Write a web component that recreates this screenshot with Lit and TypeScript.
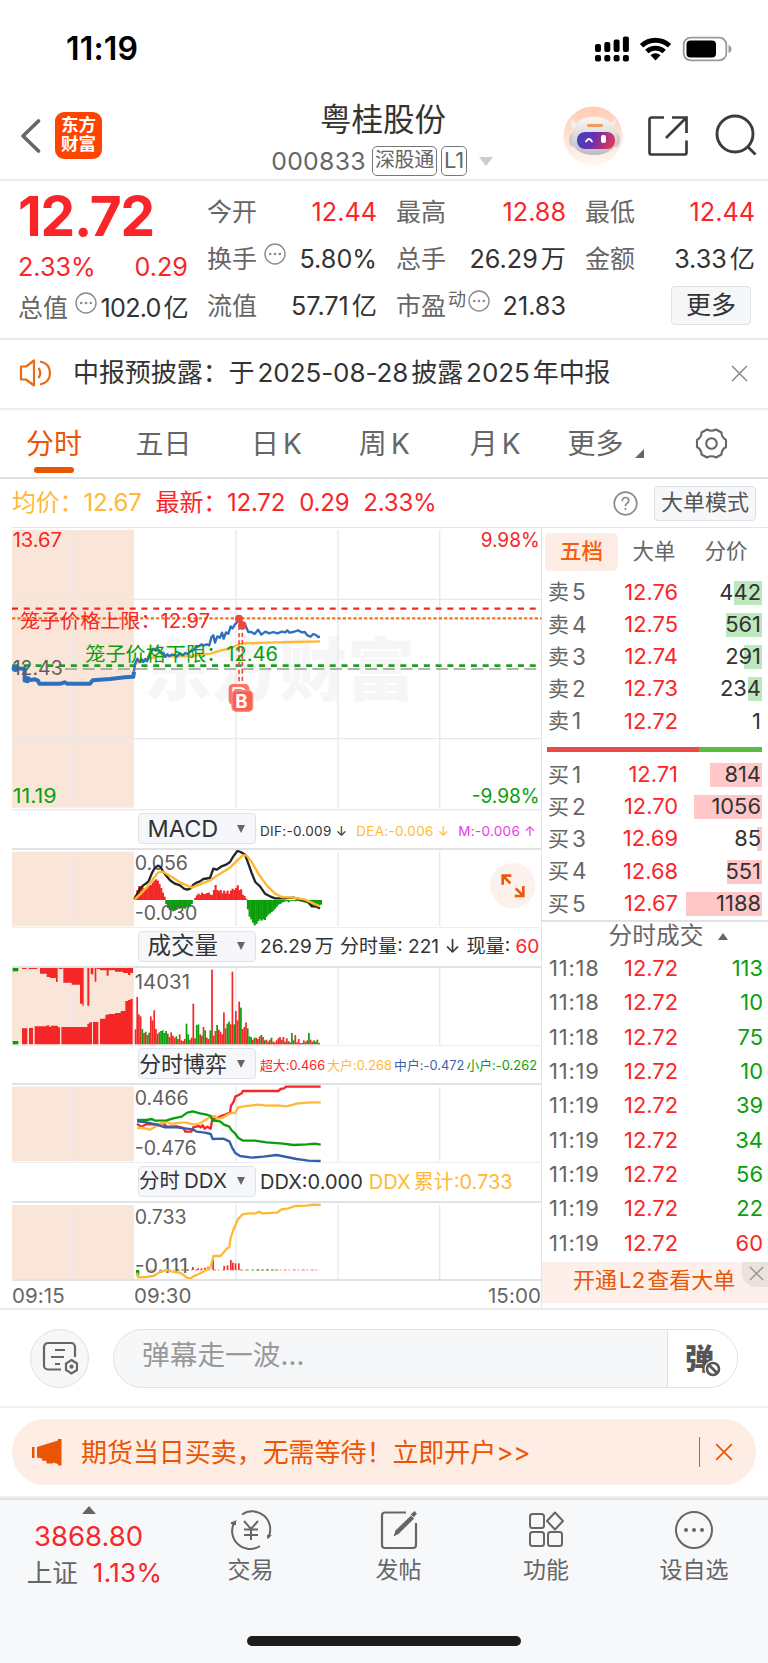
import { LitElement, html, svg, css, nothing } from "lit";

type Row = [string, string, string, number];

const sells: Row[] = [
  ["卖5", "12.76", "442", 28],
  ["卖4", "12.75", "561", 36],
  ["卖3", "12.74", "291", 18.5],
  ["卖2", "12.73", "234", 14.5],
  ["卖1", "12.72", "1", 0],
];
const buys: Row[] = [
  ["买1", "12.71", "814", 52],
  ["买2", "12.70", "1056", 68],
  ["买3", "12.69", "85", 5],
  ["买4", "12.68", "551", 35.5],
  ["买5", "12.67", "1188", 76.5],
];
const trades: [string, string, string][] = [
  ["11:18", "113", "down"],
  ["11:18", "10", "down"],
  ["11:18", "75", "down"],
  ["11:19", "10", "down"],
  ["11:19", "39", "down"],
  ["11:19", "34", "down"],
  ["11:19", "56", "down"],
  ["11:19", "22", "down"],
  ["11:19", "60", "up"],
];

const RED = "#f42626";
const GREEN = "#0a9e0a";
const YELLOW = "#ffb937";
const STEP = 5.1;

const macdBars = [
  15, 30, 42, 40, 38, 34, 36, 38, 42, 45, 52, 58, 62, 58, 48, 36, 22, 10, -12, -24, -30, -30, -34, -32, -30, -26, -26,
  -24, -24, -26, -22, -20, -18, -12, 0, 6, 14, 19, 15, 22, 18, 18, 21, 22, 16, 15, 30, 45, 30, 26, 30, 20, 28, 20, 28,
  18, 28, 34, 30, 36, 44, 30, 32, 16, 12, 4, -28, -50, -58, -68, -76, -72, -64, -58, -62, -58, -60, -50, -44, -40, -36,
  -32, -26, -20, -14, -12, -8, -6, -4, -3, -7, -2, -3, -2, -4, -3, -3, -5, -6, -7, -8, -10, -13, -16, -18, -20, -20,
  -20, -16, -14,
];

const volBars = [
  45, 142, 90, 84, -46, 34, -38, 28, -35, 84, 72, 102, 46, -32, 36, -40, -42, -34, -40, 32, -22, 36, 26, 20, -24, 16, 30,
  12, 10, 16, -62, -30, 14, 20, 122, 18, -58, -60, 30, -26, 52, -42, 20, 16, -42, 224, 26, 40, -58, 44, 38, 30, 96, 48,
  -62, -68, 60, 218, -60, 100, 72, 128, -110, 46, 52, 66, -48, -24, -22, 14, -20, 20, 16, 24, -28, 22, -12, 14, 8, 14,
  -20, 8, 6, 12, 18, 22, 14, 22, -8, 18, 10, -6, -34, -12, 28, 6, 16, 4, 4, 12, -8, 12, -34, 14, 8, -12, 8, -14, 4,
];

const bars = (data: number[], base: number, x0: number) =>
  data.map((v, i) =>
    v === 0
      ? nothing
      : svg`<rect x=${x0 + i * STEP} y=${v > 0 ? base - v : base} width="6.4" height=${Math.abs(v)} fill=${v > 0 ? RED : GREEN}></rect>`
  );

const volumes = (data: number[], base: number, x0: number) =>
  data.map(
    (v, i) =>
      svg`<rect x=${x0 + i * STEP} y=${base - Math.abs(v)} width="5.1" height=${Math.abs(v)} fill=${v > 0 ? RED : GREEN}></rect>`
  );

const line = (pts: string, color: string, w = 4) =>
  svg`<polyline points=${pts} fill="none" stroke=${color} stroke-width=${w} stroke-linejoin="round"></polyline>`;

const grid = (top: number, bottom: number) => svg`
  <rect x="36" y=${top} width="366" height=${bottom - top} fill="#fae6d9"></rect>
  ${[219, 708, 1014, 1319].map(
    (x) => svg`<line x1=${x} x2=${x} y1=${top} y2=${bottom} stroke="#e6e8ee" stroke-width="4"></line>`
  )}`;

const label = (x: number, y: number, w: number, t: string, fill = "#5f5f5f", size = 59) =>
  svg`<text x=${x} y=${y} font-size=${size} textLength=${w} lengthAdjust="spacingAndGlyphs" fill=${fill}>${t}</text>`;

const dots = html`<svg class="dots" viewBox="0 0 22 22">
  <circle cx="11" cy="11" r="10" fill="none" stroke="#8a8a8a" stroke-width="1.4" />
  <g fill="#8a8a8a"><circle cx="6.2" cy="11" r="1.3" /><circle cx="11" cy="11" r="1.3" /><circle cx="15.8" cy="11" r="1.3" /></g>
</svg>`;

const cross = (size: number, color: string, w = 1.6) => html`<svg width=${size} height=${size} viewBox="0 0 16 16">
  <path d="M1 1L15 15M15 1L1 15" stroke=${color} stroke-width=${w} fill="none" />
</svg>`;

class AppRoot extends LitElement {
  static styles = css`
    :host {
      display: block;
      width: 768px;
      height: 1663px;
      background: #fff;
      overflow: hidden;
      font-family: Inter, "Noto Sans CJK SC", sans-serif;
      color: #333;
      line-height: 1;
    }
    * { box-sizing: border-box; }
    svg { display: block; flex: none; }
    svg text { font-family: Inter, "Noto Sans CJK SC", sans-serif; }
    div, span { white-space: nowrap; }
    .up, .stat.up { color: #fa2529; }
    .down { color: #0a9e0a; }
    .yellow { color: #ffb937; }
    .blue { color: #3c62a4; }
    .magenta { color: #e63ae8; }
    .num { margin: 0 3px; }

    .status { height: 96px; display: flex; align-items: center; padding: 2px 36px 0 66px; justify-content: space-between; }
    .time { font-size: 32px; font-weight: 600; color: #000; letter-spacing: 0.2px; }

    .header { height: 85px; border-bottom: 2px solid #ececec; display: flex; padding-left: 20px; }
    .back { margin: 23px 14px 0 0; }
    .logo { width: 47px; height: 47px; margin-top: 16px; border-radius: 9px; background: #ff4400; color: #fff; font-size: 17.5px; font-weight: 700; line-height: 18.5px; text-align: center; padding-top: 4px; }
    .title { width: 430px; display: flex; flex-direction: column; align-items: center; padding-top: 8px; margin-left: 66px; }
    .name { font-size: 31.5px; line-height: 31px; color: #333; }
    .code { display: flex; align-items: center; font-size: 24.8px; color: #666; margin: 11px 2px 0 0; height: 30px; letter-spacing: 0.3px; }
    .code span + span { margin-left: 4px; }
    .tag { height: 30px; border: 1.5px solid #777; border-radius: 5px; font-size: 20px; line-height: 27px; padding: 0 2px; letter-spacing: -0.3px; }
    .tag.l1 { font-size: 22px; }
    .tag.first { margin-left: 6px !important; }
    .caret { width: 0; height: 0; border: 7px solid transparent; border-top: 9px solid #ccc; border-bottom: 0; margin-left: 12px; }
    .robot { margin: 10px 0 0 -35px; }
    .share { margin: 19px 0 0 24px; }
    .search { margin: 18px 0 0 26px; }

    .stats { height: 159px; border-bottom: 2px solid #e6eaec; display: grid; grid-template-columns: repeat(4, 170px); column-gap: 19px; padding: 8px 0 0 18px; font-size: 25.2px; }
    .stat { height: 47px; display: flex; align-items: center; color: #333; }
    .stat .k { color: #666; font-size: 25px; }
    .stat .v { margin-left: auto; display: flex; gap: 3px; }
    .stat .v.tight { letter-spacing: -0.8px; }
    .stat .sup { font-size: 18px; margin-top: -14px; color: #666; }
    .dots { width: 22px; height: 22px; margin: -11px 0 0 7px; }
    .sup { margin-left: 2px; }
    .sup + .dots { margin-left: 2px; }
    .first-col { margin-top: -4px; }
    .first-col .stat { height: 41px; }
    .price { height: 62px; display: flex; align-items: center; font-size: 55px; font-weight: 700; letter-spacing: -1.2px; color: #fa2529; }
    .more { margin: 3px 4px 0 auto; width: 80px; height: 39px; border: 1.5px solid #dfe1e8; border-radius: 4px; background: #f6f7f9; text-align: center; line-height: 36px; font-size: 25px; }

    .notice { height: 70px; border-bottom: 2px solid #eee; display: flex; align-items: center; padding: 0 20px 2px 19px; font-size: 26px; }
    .notice .msg { margin-left: 20px; letter-spacing: -0.07px; }
    .notice .close { margin-left: auto; }

    .tabs { height: 69px; border-bottom: 2px solid #dde1e4; display: flex; align-items: flex-start; padding: 20px 0 0 26px; font-size: 28px; line-height: 28px; color: #666; }
    .tab { display: flex; gap: 4px; }
    .tab.on { color: #ea5504; flex-direction: column; align-items: center; gap: 0; margin-right: 1px; }
    .tab.on::after { content: ""; width: 40px; height: 6px; border-radius: 3px; background: #ea5504; margin-top: 9px; }
    .corner { margin: 19px 0 0 11px; }
    .gear { margin: -3px 0 0 51px; }

    .info { height: 48px; display: flex; align-items: center; padding: 0 12px; font-size: 24px; letter-spacing: -0.2px; }
    .info .up { margin-left: 14px; }
    .info .help { margin-left: auto; }
    .mode { margin-left: 16px; width: 102px; height: 35px; border: 1.5px solid #dfe1e8; border-radius: 4px; background: #f6f7f9; color: #555; font-size: 22px; line-height: 31px; text-align: center; letter-spacing: 0; }

    .main { height: 783px; display: flex; border-bottom: 2px solid #e9ecee; }
    .charts { width: 530px; margin-left: 12px; border-right: 1.5px solid #e1e4e8; border-top: 1.5px solid #e1e4e8; }
    .ind-head { height: 39px; display: flex; align-items: center; padding-left: 126px; }
    .select { width: 118px; height: 31px; border: 1.5px solid #dfe2e8; border-radius: 4px; background: #f6f7fa; display: flex; align-items: center; justify-content: space-between; padding: 0 10px 0 8.5px; font-size: 23.5px; color: #333; flex: none; }
    .select::after { content: ""; border: 4.5px solid transparent; border-top: 8px solid #666; border-bottom: 0; }
    .select.wide { padding-left: 0; font-size: 22px; }
    .select.ddx { padding-left: 0; font-size: 20.5px; }
    .ddx-latin { margin-left: 4px; }
    .legend { margin-left: 4px; display: flex; align-items: center; }
    .legend.l1 { font-size: 13.5px; letter-spacing: 0.3px; gap: 9px; padding-top: 6px; }
    .legend.l2 { font-size: 19.1px; gap: 6px; padding-top: 2px; }
    .legend.l3 { font-size: 12.8px; gap: 2px; padding-top: 6px; letter-spacing: 0.05px; }
    .legend.l4 { font-size: 20px; gap: 6px; padding-top: 1px; }
    .ind { border-top: 2px solid #dfe3e6; height: 78.5px; }
    .ind.last { height: 78px; }
    .axis { border-top: 2px solid #dfe3e6; height: 28px; padding-top: 5px; display: grid; grid-template-columns: 122px 1fr auto; font-size: 20.5px; letter-spacing: 0.1px; color: #666; }

    .book { width: 226px; border-top: 1.5px solid #e1e4e8; display: flex; flex-direction: column; }
    .book-tabs { display: flex; height: 48px; padding: 5px 0 0 3px; font-size: 21.5px; color: #666; }
    .book-tabs span { width: 72px; height: 38px; line-height: 36px; text-align: center; border-radius: 5px; }
    .book-tabs .on { background: #fdece4; color: #f85c0c; font-weight: 500; width: 73px; }
    .quote { height: 32.25px; display: grid; grid-template-columns: 61px 69px 1fr; align-items: center; padding: 1px 6px 0; font-size: 21.9px; color: #333; }
    .quote .k { color: #666; font-size: 21px; display: flex; gap: 3px; }
    .quote .k .lv { font-size: 22.5px; }
    .quote .p { text-align: right; }
    .vol { height: 24px; display: flex; align-items: center; justify-content: flex-end; padding-right: 1px; }
    .vol.sell { background: linear-gradient(#bde7bd, #bde7bd) no-repeat right / var(--w) 100%; }
    .vol.buy { background: linear-gradient(#ffc7c8, #ffc7c8) no-repeat right / var(--w) 100%; }
    .split { margin: 10px 6px 6px 5px; height: 5px; flex: none; background: linear-gradient(90deg, #e94b4b 70.5%, #5cbb42 70.5%); }
    .deal-head { height: 32px; border-top: 2px solid #dfe3e6; display: flex; align-items: center; justify-content: center; font-size: 23.7px; color: #666; padding: 0 0 1px 27px; flex: none; }
    .deal-head::after { content: ""; border: 5.5px solid transparent; border-bottom: 7px solid #666; border-top: 0; margin-left: 15px; }
    .deal { height: 34.4px; display: grid; grid-template-columns: 60px 69px 1fr; align-items: center; padding: 0 5px 0 7px; font-size: 21.9px; }
    .deal .t { color: #666; letter-spacing: 0.8px; }
    .deal .p { text-align: right; }
    .deal .n { text-align: right; }
    .promo { height: 41px; flex: none; margin-top: 1px; background: #fdf0ea; color: #ea5504; font-size: 22px; display: flex; padding-left: 31px; line-height: 37px; }
    .promo .num { letter-spacing: 0.2px; margin: 0 2px; }
    .promo .x { margin-left: auto; width: 26px; height: 25px; border-bottom-left-radius: 14px; background: #ece1db; padding: 4px 0 0 7px; }

    .composer { height: 98px; border-bottom: 2px solid #f2f2f2; display: flex; align-items: center; padding: 0 30px; }
    .round { width: 59px; height: 59px; border: 1.5px solid #dfe2e6; border-radius: 50%; background: #f6f7f9; display: grid; place-items: center; }
    .field { margin-left: 24px; width: 625px; height: 59px; border: 1.5px solid #dfe2e6; border-radius: 30px; background: #f6f7f9; display: flex; overflow: hidden; font-size: 27.7px; color: #999; }
    .field .ph { padding: 12px 0 0 28px; flex: 1; }
    .danmu { width: 70px; background: #fff; border-left: 1.5px solid #dfe2e6; padding: 13px 0 0 17px; }

    .ad { margin: 11px 12px 11px; height: 66px; border-radius: 33px; background: #fdede5; color: #ea5504; display: flex; align-items: center; padding: 0 23px 0 19px; font-size: 26px; }
    .ad .msg { margin-left: 18px; letter-spacing: -0.05px; padding-top: 1px; }
    .ad .bar { margin-left: auto; width: 1.5px; height: 30px; background: #ea5504; margin-right: 15px; }

    .bottom { height: 168px; border-top: 2px solid #eee; background: #f7f8fa; display: flex; flex-direction: column; align-items: center; }
    .nav { width: 100%; height: 139px; flex: none; border-top: 2px solid #dfe1e4; display: grid; grid-template-columns: 176px 149px 147px 148px 148px; }
    .item { display: flex; flex-direction: column; align-items: center; font-size: 23px; color: #666; padding-top: 10px; }
    .item svg { margin-bottom: 9px; }
    .index { padding: 6px 0 0 1px; }
    .index .tri { border: 7.5px solid transparent; border-bottom: 8px solid #666; border-top: 0; }
    .index .n { font-size: 27.5px; margin-top: 9px; }
    .index .r { display: flex; gap: 15px; font-size: 25.5px; margin: 9px 0 0 12px; }
    .index .r .up { font-size: 26px; letter-spacing: 0.3px; }
    .home { width: 274px; height: 10px; border-radius: 5px; background: #1c1c1c; flex: none; margin-top: -1px; }
  `;

  private status() {
    return html`<div class="status">
      <div class="time">11:19</div>
      <svg width="138" height="26" viewBox="594 36 138 26">
        <g fill="#000">
          ${[0, 1, 2, 3].map((i) => {
            const h = [8, 10, 12.5, 15.5][i];
            return svg`<rect x=${595 + i * 9.3} y=${52 - h} width="6" height=${h} rx="2"></rect><rect x=${595 + i * 9.3} y="55" width="6" height="6.5" rx="2"></rect>`;
          })}
        </g>
        <g fill="none" stroke="#000" stroke-width="4.8">
          <path d="M641.5 45.8a20.5 20.5 0 0 1 28 0" />
          <path d="M646.8 51.6a12.8 12.8 0 0 1 17.4 0" />
        </g>
        <path d="M655.5 60.5l-5-5.3a7.5 7.5 0 0 1 10 0z" fill="#000" />
        <rect x="683.7" y="37.7" width="42.6" height="22.6" rx="7" fill="none" stroke="#9a9a9a" stroke-width="1.8" />
        <rect x="686.5" y="40.5" width="29.5" height="17" rx="4" fill="#000" />
        <path d="M728.5 45v8q3-1 3-4t-3-4z" fill="#9a9a9a" />
      </svg>
    </div>`;
  }

  private header() {
    return html`<div class="header">
      <svg class="back" width="21" height="34" viewBox="0 0 21 34"><path d="M18.5 2L3 17L18.5 32" fill="none" stroke="#666" stroke-width="3.6" stroke-linecap="round" stroke-linejoin="round" /></svg>
      <div class="logo">东方<br />财富</div>
      <div class="title">
        <div class="name">粤桂股份</div>
        <div class="code"><span>000833</span><span class="tag first">深股通</span><span class="tag l1">L1</span><i class="caret"></i></div>
      </div>
      <svg class="robot" width="60" height="60" viewBox="0 0 60 60">
        <defs>
          <linearGradient id="halo" x1="0" y1="0" x2="0" y2="1"><stop offset="0" stop-color="#ffccb4" /><stop offset="1" stop-color="#fff7f3" /></linearGradient>
          <linearGradient id="visor" x1="0" y1="0" x2="1" y2="0.2"><stop offset="0" stop-color="#3a48b8" /><stop offset=".5" stop-color="#6a2fb0" /><stop offset="1" stop-color="#d8355f" /></linearGradient>
          <linearGradient id="shell" x1="0" y1="0" x2="0" y2="1"><stop offset="0" stop-color="#fbf8f8" /><stop offset="1" stop-color="#bfbbc2" /></linearGradient>
        </defs>
        <circle cx="30" cy="30" r="29.5" fill="url(#halo)" />
        <path d="M11 24q-5-6-2-11q3 5 8 4zM48 24q6-6 4-11q-3 5-8 4z" fill="#f4efef" />
        <ellipse cx="10" cy="34" rx="4" ry="7" fill="#cfcad0" /><ellipse cx="53" cy="34" rx="4" ry="7" fill="#cfcad0" />
        <path d="M9 31q1-20 22-20t23 20q0 9-6 13q-6 5-17 5t-17-5q-5-4-5-13z" fill="url(#shell)" />
        <rect x="14" y="26" width="38" height="17" rx="8" fill="url(#visor)" />
        <rect x="24" y="18" width="16" height="3" rx="1.5" fill="#f39a5c" />
        <path d="M23 35.5q3-5 6 0" fill="none" stroke="#fff" stroke-width="1.8" stroke-linecap="round" />
        <rect x="38" y="29" width="5" height="8" rx="2" fill="#fff" />
      </svg>
      <svg class="share" width="42" height="42" viewBox="0 0 42 42" fill="none" stroke="#3c3c3c" stroke-width="2.7">
        <path d="M17 2.5H4.5a2 2 0 0 0-2 2v33a2 2 0 0 0 2 2h33a2 2 0 0 0 2-2V25.5" />
        <path d="M25 2.5H39.5V18M39 3L19 23" />
      </svg>
      <svg class="search" width="42" height="42" viewBox="0 0 42 42" fill="none" stroke="#3c3c3c" stroke-width="2.9">
        <circle cx="20" cy="20" r="18" /><path d="M32.5 32.5L40.5 40.5" />
      </svg>
    </div>`;
  }

  private stats() {
    const stat = (k: string, v: string, cls = "", extra: unknown = nothing, unit = "") =>
      html`<div class="stat"><span class="k">${k}</span>${extra}<span class="v ${cls}"><span>${v}</span>${unit ? html`<span>${unit}</span>` : nothing}</span></div>`;
    return html`<div class="stats">
      <div class="first-col">
        <div class="price">12.72</div>
        <div class="stat up"><span>2.33%</span><span class="v">0.29</span></div>
        ${stat("总值", "102.0", "tight", dots, "亿")}
      </div>
      <div>${stat("今开", "12.44", "up")}${stat("换手", "5.80%", "", dots)}${stat("流值", "57.71", "", nothing, "亿")}</div>
      <div>${stat("最高", "12.88", "up")}${stat("总手", "26.29", "", nothing, "万")}${stat("市盈", "21.83", "", html`<span class="sup">动</span>${dots}`)}</div>
      <div>${stat("最低", "12.44", "up")}${stat("金额", "3.33", "", nothing, "亿")}<div class="more">更多</div></div>
    </div>`;
  }

  private notice() {
    return html`<div class="notice">
      <svg width="34" height="28" viewBox="0 0 34 28" fill="none" stroke="#ea6a14" stroke-width="2.2">
        <path d="M2 7.5h5l8-6v25l-8-6h-5z" stroke-linejoin="round" />
        <path d="M19.5 9q3.5 5 0 10M21 2.5q10 2 10 11.5t-10 11.5" />
      </svg>
      <span class="msg">中报预披露：于<span class="num">2025-08-28</span>披露<span class="num">2025</span>年中报</span>
      <span class="close">${cross(17, "#888", 1.4)}</span>
    </div>`;
  }

  private tabs() {
    const t = (s: string, left: number, k = "") =>
      html`<div class="tab" style="margin-left:${left}px"><span>${s}</span>${k ? html`<span>${k}</span>` : nothing}</div>`;
    return html`<div class="tabs">
      <div class="tab on">分时</div>
      ${t("五日", 52.5)}${t("日", 59.5, "K")}${t("周", 57, "K")}${t("月", 60, "K")}${t("更多", 47)}
      <svg class="corner" width="9" height="9" viewBox="0 0 9 9"><path d="M9 0V9H0z" fill="#666" /></svg>
      <svg class="gear" width="33" height="33" viewBox="0 0 33 33" fill="none" stroke="#666" stroke-width="2.1" stroke-linejoin="round">
        <path d="M12 2.5q4.5 2.5 9 0l5.5 3q0 5 4.5 7.5v7q-4.5 2.5-4.5 7.5l-5.5 3q-4.5-2.5-9 0l-5.5-3q0-5-4.5-7.5v-7q4.5-2.5 4.5-7.5z" />
        <circle cx="16.5" cy="16.5" r="5.3" />
      </svg>
    </div>`;
  }

  private priceChart() {
    return html`<svg width="528" height="281" viewBox="36 24 1584 843" overflow="visible">
      <text x="430" y="525" font-size="205" font-weight="900" textLength="815" lengthAdjust="spacingAndGlyphs" fill="#f6f6f7">东方财富</text>
      ${grid(30, 863)}
      <g stroke="#e6e8ee" stroke-width="4"><path d="M36 238H1624M36 656H1624M36 869H1624" /></g>
      <g fill="none">
        <path d="M36 266H1615" stroke="${RED}" stroke-width="7" stroke-dasharray="18 17.3" />
        <path d="M36 295H1624" stroke="#f5731f" stroke-width="7" stroke-dasharray="10 6" />
        <path d="M36 437H1615" stroke="#1fa01f" stroke-width="8" stroke-dasharray="18 17.3" />
        <path d="M195 447H1615" stroke="#999" stroke-width="5" stroke-dasharray="36 17" />
      </g>
      ${line("36,445 74,446 74,482 83,484 84,474 92,480 105,478 114,482 118,491 182,491 194,487 202,491 270,491 278,481 330,477 375,472 400,470 402,455", "#2f6fc0", 12)}
      <circle cx="46" cy="445" r="11" fill="#2f6fc0" />
      ${line("404,435 415,426 440,420 460,412 500,410 570,408 600,405 632,401 660,392 690,385 712,375 730,370 800,368 880,366 960,364", YELLOW, 7)}
      ${line("402,455 405,432 412,416 420,426 425,418 430,426 436,417 441,424 448,408 455,392 460,386 468,392 474,388 482,397 490,398 496,410 502,403 508,408 516,404 524,405 530,410 540,400 548,406 556,399 564,402 572,393 580,391 588,381 596,379 604,373 612,376 620,373 628,376 634,352 640,346 645,368 652,349 660,353 666,338 671,356 678,337 685,341 692,319 698,325 705,313 712,306 716,296 722,308 727,317 737,318 745,336 754,336 764,342 774,329 784,344 796,335 808,340 820,336 832,340 846,335 856,337 862,331 868,338 880,336 894,331 906,337 914,336 922,346 932,350 940,342 948,345 954,351 960,350", "#2f6fc0", 7)}
      <path d="M717 295V500M727 316V520" stroke="#f4493c" stroke-width="5" stroke-dasharray="13 9" />
      <circle cx="717" cy="296" r="12" fill="#e9493f" /><circle cx="727" cy="316" r="13" fill="#e9493f" />
      <rect x="686" y="492" width="62" height="62" rx="13" fill="#fd7466" />
      <path d="M700 542V504H722q12 1 11 10" fill="none" stroke="#fff" stroke-width="6" />
      <rect x="696" y="512" width="62" height="62" rx="13" fill="#fb6052" stroke="#fd8b7e" stroke-width="4" />
      <text x="706" y="564" font-size="56" font-weight="700" fill="#fff">B</text>
      ${label(38, 81, 148, "13.67", RED)}
      ${label(38, 849, 132, "11.19", GREEN)}
      ${label(1442, 81, 177, "9.98%", RED)}
      ${label(1415, 849, 204, "-9.98%", GREEN)}
      ${label(38, 465, 150, "12.43")}
      ${label(60, 324, 570, "笼子价格上限：12.97", RED)}
      ${label(256, 424, 578, "笼子价格下限：12.46", GREEN)}
    </svg>`;
  }

  private indicators() {
    return html`
      <div class="ind-head"><div class="select">MACD</div><div class="legend l1"><span>DIF:-0.009 ↓</span><span class="yellow">DEA:-0.006 ↓</span><span class="magenta">M:-0.006 ↑</span></div></div>
      <div class="ind"><svg width="528" height="78" viewBox="36 149 1584 234">
        ${grid(154, 378)}
        <path d="M36 383H1624" stroke="#e6e8ee" stroke-width="4" />
        ${bars(macdBars, 299, 404)}
        ${label(404, 209, 160, "0.056")}${label(404, 359, 188, "-0.030")}
        ${line("403,297 412,280 420,265 430,255 440,248 446,242 455,220 464,203 474,196 482,200 490,215 500,228 510,240 525,250 540,255 552,265 562,268 572,264 580,253 592,246 600,243 610,236 630,233 640,205 650,208 665,198 680,192 690,185 700,168 712,152 722,155 735,163 745,190 755,218 766,245 780,258 795,280 810,288 825,294 850,294 880,292 905,298 925,305 935,318 950,319 960,324", "#262626", 7)}
        ${line("404,297 420,282 440,262 460,235 475,216 488,214 510,226 540,246 575,262 600,252 635,238 650,226 690,202 715,177 728,165 740,165 755,185 775,220 800,255 825,280 845,290 880,292 915,298 935,307 960,318", "#ffb72e", 7)}
        <circle cx="1538" cy="256" r="68" fill="#fdf1eb" />
        <g fill="none" stroke="#ea5a10" stroke-width="8"><path d="M1508 253V226H1534M1509 227L1531 249M1570 257V287H1544M1569 286L1547 264" /></g>
      </svg></div>
      <div class="ind-head"><div class="select">成交量</div><div class="legend l2"><span>26.29<span style="margin-left:3px">万</span></span><span>分时量: 221 ↓</span><span>现量: <span class="up">60</span></span></div></div>
      <div class="ind"><svg width="528" height="78" viewBox="36 501 1584 234">
        ${grid(501, 730)}
        <path d="M36 735H1624" stroke="#e6e8ee" stroke-width="4" />
        <g fill="${RED}">
          <path d="M120 501V518H140V528H150V531H168V543H173V501zM190 501V545H215V551H240V608H247V614H251V501zM262 501V614H268V501zM272 501V520H280V501zM284 501V542H289V501zM300 501V508H320V524H326V508H345V512H370V516H384V522H391V516H399V501z" />
          <path d="M66 502H80M86 502H112M176 502H188M290 502H318" stroke="${RED}" stroke-width="4" />
          <path d="M66 730V682H82V730zM87 730V681H99V730zM104 730V676H140V673H148V678H152V674H174V679H180V730zM184 730V678H262V668H268V664H276V730zM279 730V663H295V730zM300 730V653H316V641H325V639H345V636H362V630H376V600H384V597H391V594H398V730z" />
        </g>
        <g fill="${GREEN}"><rect x="38" y="501" width="17" height="10" /><rect x="38" y="720" width="17" height="10" /></g>
        ${volumes(volBars, 730, 404)}
        ${label(404, 563, 166, "14031")}
      </svg></div>
      <div class="ind-head"><div class="select wide">分时博弈</div><div class="legend l3"><span class="up">超大:0.466</span><span class="yellow">大户:0.268</span><span class="blue">中户:-0.472</span><span class="down">小户:-0.262</span></div></div>
      <div class="ind"><svg width="528" height="78" viewBox="36 103 1584 234">
        ${grid(108, 332)}
        <path d="M36 337H1624" stroke="#e6e8ee" stroke-width="4" />
        ${label(404, 164, 162, "0.466")}${label(404, 313, 186, "-0.476")}
        ${line("411,220 425,228 440,220 470,222 490,218 500,228 530,227 550,232 556,243 574,243 580,230 596,226 602,230 608,224 614,234 622,228 632,234 637,205 650,203 665,195 675,193 684,188 690,186 693,165 700,155 706,138 716,133 726,127 728,121 835,121 842,115 852,113 858,108 962,108", RED, 7)}
        ${line("411,232 430,232 450,237 465,228 480,220 500,214 515,220 540,216 560,216 580,222 600,218 620,206 630,198 645,196 652,205 670,200 690,188 706,186 715,170 730,167 750,165 775,162 800,165 830,164 860,167 890,159 920,156 962,155", "#ffb937", 7)}
        ${line("411,208 440,208 456,205 465,210 500,209 520,203 545,198 562,186 578,182 600,188 620,192 632,196 638,210 660,212 672,222 688,228 694,238 705,248 715,262 730,270 765,270 800,275 850,279 880,283 920,281 945,279 962,282", GREEN, 7)}
        ${line("411,212 440,215 470,222 495,230 530,230 560,234 578,236 590,243 615,246 632,250 638,265 670,264 688,272 696,290 705,306 720,316 755,321 790,318 830,313 860,319 890,325 925,330 962,331", "#325fa8", 7)}
      </svg></div>
      <div class="ind-head"><div class="select ddx"><span>分时<span class="ddx-latin">DDX</span></span></div><div class="legend l4"><span>DDX:0.000</span><span class="yellow">DDX<span style="margin-left:3px">累计:0.733</span></span></div></div>
      <div class="ind last"><svg width="528" height="76" viewBox="36 455 1584 228">
        ${grid(461, 684)}
        <g fill="${RED}">
          ${[[576, 9], [592, 5], [602, 5], [612, 7], [622, 10], [637, 30], [670, 12], [680, 14], [690, 30], [696, 22], [704, 20], [714, 20]].map(
            ([x, h]) => svg`<rect x=${x} y=${656 - h} width="5" height=${h}></rect>`
          )}
        </g>
        <path d="M450 656H740M770 656H960" stroke="#f46a5a" stroke-width="3" stroke-dasharray="9 6 4 8" />
        <path d="M530 656H566M740 656H832" stroke="${GREEN}" stroke-width="3" stroke-dasharray="6 9" />
        <rect x="408" y="656" width="10" height="16" fill="${GREEN}" />
        ${label(404, 517, 156, "0.733")}${label(404, 665, 160, "-0.111")}
        ${line("411,664 414,678 440,677 460,674 480,662 500,656 520,662 540,664 552,672 562,680 572,681 580,675 596,668 612,660 632,648 640,614 662,614 672,602 682,590 688,588 692,560 702,530 715,502 728,489 745,486 768,486 776,481 786,486 830,484 845,474 865,471 885,464 920,463 940,460 962,461", "#ffb937", 7)}
      </svg></div>
      <div class="axis"><span>09:15</span><span>09:30</span><span>15:00</span></div>
    `;
  }

  private book() {
    const quote = (r: Row, side: string) => html`<div class="quote">
      <span class="k"><span>${r[0][0]}</span><span class="lv">${r[0][1]}</span></span><span class="p up">${r[1]}</span>
      <span class="vol ${side}" style="--w:${r[3]}px">${r[2]}</span>
    </div>`;
    return html`<div class="book">
      <div class="book-tabs"><span class="on">五档</span><span>大单</span><span>分价</span></div>
      ${sells.map((r) => quote(r, "sell"))}
      <div class="split"></div>
      ${buys.map((r) => quote(r, "buy"))}
      <div class="deal-head">分时成交</div>
      ${trades.map((d) => html`<div class="deal"><span class="t">${d[0]}</span><span class="p up">12.72</span><span class="n ${d[2]}">${d[1]}</span></div>`)}
      <div class="promo"><span>开通<span class="num">L2</span>查看大单</span><div class="x">${cross(15, "#999", 1.6)}</div></div>
    </div>`;
  }

  private composer() {
    return html`<div class="composer">
      <div class="round"><svg width="36" height="34" viewBox="0 0 36 34" fill="none" stroke="#666" stroke-width="2.2">
        <path d="M19 28.5H6a4 4 0 0 1-4-4V6a4 4 0 0 1 4-4h23a4 4 0 0 1 4 4v10" />
        <path d="M13 9h10M9 16h13M13 23h5" />
        <path d="M29.500 19l5.500 3.500v6.500l-5.500 3.500l-5.500-3.500v-6.500z" /><circle cx="29.5" cy="25.7" r="1" />
      </svg></div>
      <div class="field"><span class="ph">弹幕走一波...</span>
        <div class="danmu"><svg width="40" height="36" viewBox="0 0 40 36">
          <text x="0" y="27" font-size="29" font-weight="900" fill="#555">弹</text>
          <circle cx="28" cy="26" r="8.5" fill="#fff" /><circle cx="28" cy="26" r="6" fill="none" stroke="#555" stroke-width="2.6" /><path d="M24 22L32 30" stroke="#555" stroke-width="2.6" />
        </svg></div>
      </div>
    </div>`;
  }

  private ad() {
    return html`<div class="ad">
      <svg width="32" height="28" viewBox="0 0 32 28" fill="#ea5504"><path d="M1 9h2.500v11H1zM6 9L27 2.500V1h3.500v26.500H27V26L22 24.500V25.500h-6.500V23L11 22.500V20.500L6 19.500z" /></svg>
      <span class="msg">期货当日买卖，无需等待！立即开户&gt;&gt;</span>
      <span class="bar"></span>${cross(18, "#ea5504", 1.5)}
    </div>`;
  }

  private bottom() {
    return html`<div class="bottom">
      <div class="nav">
        <div class="item index"><i class="tri"></i><span class="n up">3868.80</span><span class="r"><span>上证</span><span class="up">1.13%</span></span></div>
        <div class="item"><svg width="42" height="40" viewBox="0 0 42 40" fill="none" stroke="#666" stroke-width="2">
          <path d="M12 4.5A18 18 0 0 1 38.5 27L41 24.5M38 28.5V25M30 36A18 18 0 0 1 4.5 12L1 13.5M5 15V11" />
          <path d="M14 11L21 19L28 11M21 19V30M14 19.500H28M14 25H28" />
        </svg><span>交易</span></div>
        <div class="item"><svg width="38" height="40" viewBox="0 0 38 40" fill="none" stroke="#666" stroke-width="2.2">
          <path d="M26 2.500H5a3 3 0 0 0-3 3V35a3 3 0 0 0 3 3H33a3 3 0 0 0 3-3V13" />
          <path d="M13.500 26.500l2-6L31 5.500l3.200 3L18.500 24z" fill="#666" stroke="none" /><path d="M32.300 4.300l2.200-1.800l1 1.200l-1.800 2z" fill="#666" />
        </svg><span>发帖</span></div>
        <div class="item"><svg width="36" height="40" viewBox="0 0 36 40" fill="none" stroke="#666" stroke-width="2">
          <rect x="2" y="4" width="14" height="14" rx="2.5" /><rect x="2" y="22" width="14" height="14" rx="2.5" /><rect x="20" y="22" width="14" height="14" rx="2.5" />
          <path d="M27 2.500L35 11L27 19.500L19 11z" stroke-linejoin="round" />
        </svg><span>功能</span></div>
        <div class="item"><svg width="38" height="40" viewBox="0 0 38 40" fill="none" stroke="#666" stroke-width="2">
          <circle cx="19" cy="20" r="18" /><g fill="#666" stroke="none"><circle cx="11" cy="20" r="2" /><circle cx="19" cy="20" r="2" /><circle cx="27" cy="20" r="2" /></g>
        </svg><span>设自选</span></div>
      </div>
      <div class="home"></div>
    </div>`;
  }

  render() {
    return html`${this.status()}${this.header()}${this.stats()}${this.notice()}${this.tabs()}
      <div class="info">
        <span class="yellow">均价：12.67</span><span class="up">最新：12.72</span><span class="up">0.29</span><span class="up">2.33%</span>
        <svg class="help" width="25" height="25" viewBox="0 0 25 25" fill="none" stroke="#8a8a8a" stroke-width="1.7"><circle cx="12.5" cy="12.5" r="11.3" /><path d="M9.300 10.200q0-3.700 3.200-3.700t3.200 3.200q0 1.600-1.700 2.700t-1.500 2.800M12.500 17v2" /></svg>
        <div class="mode">大单模式</div>
      </div>
      <div class="main"><div class="charts">${this.priceChart()}${this.indicators()}</div>${this.book()}</div>
      ${this.composer()}${this.ad()}${this.bottom()}`;
  }
}
customElements.define("app-root", AppRoot);
